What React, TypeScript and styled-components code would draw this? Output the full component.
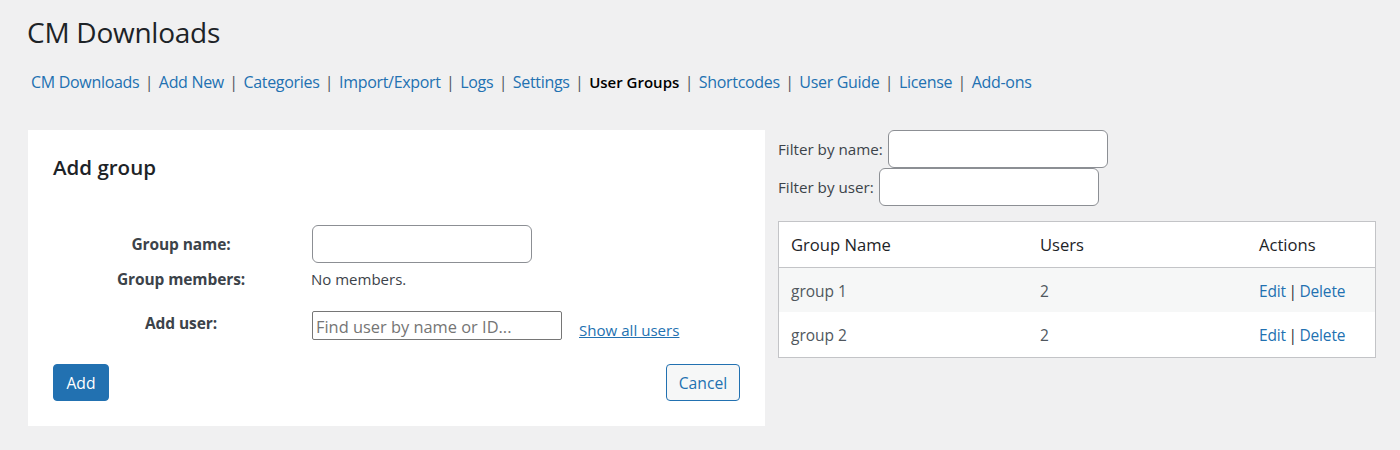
import React from "react";
import styled, { createGlobalStyle } from "styled-components";

const Global = createGlobalStyle`
  html, body { margin: 0; padding: 0; background: #f0f0f1; }
  body { font-family: "Open Sans", "Noto Sans", "Liberation Sans", sans-serif; color: #3c434a; font-size: 14px; }
  * { box-sizing: border-box; }
`;

const Page = styled.div`
  width: 1400px;
  height: 450px;
  overflow: hidden;
  padding: 13px 24px 0 28px;
`;
const Title = styled.h1`
  margin: 0 0 0 -1px;
  font-size: 28px;
  font-weight: 400;
  line-height: 38px;
  color: #1d2327;
  letter-spacing: -0.25px;
`;
const Nav = styled.nav`
  display: flex;
  align-items: center;
  margin-top: 18px;
  padding-left: 3px;
  height: 26px;
  font-size: 16px;
`;
const NavLink = styled.a<{ $current?: boolean }>`
  color: ${(p) => (p.$current ? "#000" : "#2271b1")};
  font-weight: ${(p) => (p.$current ? 600 : 400)};
  font-size: ${(p) => (p.$current ? "15px" : "16px")};
  letter-spacing: ${(p) => (p.$current ? "0" : "-0.31px")};
  text-decoration: none;
`;
const NavSep = styled.span`
  color: #50575e;
  width: 19.5px;
  text-align: center;
`;
const Columns = styled.div`
  display: flex;
  align-items: flex-start;
  margin-top: 35px;
`;
const Card = styled.section`
  width: 737px;
  height: 296px;
  background: #fff;
  padding: 24px 25px 0;
`;
const CardTitle = styled.h2`
  margin: 0;
  font-size: 20.5px;
  line-height: 26px;
  font-weight: 600;
  color: #1d2327;
`;
const Form = styled.div`
  display: grid;
  grid-template-columns: 259px 1fr;
  grid-template-rows: 38px 43px 43px;
  margin-top: 45px;
`;
const FieldLabel = styled.div<{ $lh: number }>`
  width: 256px;
  text-align: center;
  line-height: ${(p) => p.$lh}px;
  font-weight: 700;
  font-size: 15.5px;
  letter-spacing: -0.1px;
  color: #3c434a;
`;
const FieldValue = styled.div`
  display: flex;
  align-items: flex-start;
`;
const TextInput = styled.input`
  width: 220px;
  height: 38px;
  border: 1px solid #8c8f94;
  border-radius: 6px;
  background: #fff;
  padding: 0 8px;
  outline: none;
`;
const Members = styled.div`
  margin-left: -1px;
  font-size: 15px;
  line-height: 32px;
`;
const SearchInput = styled.input`
  width: 250px;
  height: 29px;
  border: 1px solid #767676;
  border-radius: 2px;
  background: #fff;
  padding: 2px 2px 0 3px;
  font: 400 16.4px "Open Sans", sans-serif;
  outline: none;
  margin-top: 5px;
  &::placeholder { color: #757575; opacity: 1; }
`;
const ShowAll = styled.a`
  margin: 13px 0 0 17px;
  font-size: 15.1px;
  line-height: 22px;
  color: #2271b1;
  text-decoration: underline;
`;
const Actions = styled.div`
  display: flex;
  justify-content: space-between;
  margin-top: 15px;
`;
const PrimaryButton = styled.button`
  width: 56px;
  height: 37px;
  background: #2271b1;
  color: #fff;
  border: 1px solid #2271b1;
  border-radius: 4px;
  font: 400 15.7px "Open Sans", sans-serif;
  padding: 0;
`;
const SecondaryButton = styled.button`
  width: 74px;
  height: 37px;
  background: #f6f7f7;
  color: #2271b1;
  border: 1px solid #2271b1;
  border-radius: 4px;
  font: 400 15.7px "Open Sans", sans-serif;
  padding: 0;
`;
const Side = styled.aside`
  margin-left: 13px;
  width: 598px;
`;
const FilterRow = styled.label`
  display: flex;
  align-items: center;
  height: 38px;
  gap: 5px;
  font-size: 15.2px;
`;
const Table = styled.table`
  width: 598px;
  margin-top: 15px;
  border: 1px solid #c3c4c7;
  border-collapse: separate;
  border-spacing: 0;
  background: #fff;
  table-layout: fixed;
`;
const Th = styled.th<{ $w: number }>`
  width: ${(p) => p.$w}px;
  height: 46px;
  padding: 0 12px;
  text-align: left;
  font-weight: 400;
  font-size: 16.6px;
  color: #1d2327;
  border-bottom: 1px solid #c3c4c7;
`;
const Tr = styled.tr<{ $alt?: boolean }>`
  background: ${(p) => (p.$alt ? "#f6f7f7" : "#fff")};
  &:last-child td { height: 45px; }
`;
const Td = styled.td`
  height: 44px;
  padding: 1px 12px 0;
  font-size: 15.5px;
  color: #50575e;
`;
const ActionLink = styled.a`
  color: #2271b1;
  text-decoration: none;
  letter-spacing: -0.15px;
`;
const ActionSep = styled.span`
  color: #2c3338;
  margin: 0 2.5px;
`;

const navItems = ["CM Downloads", "Add New", "Categories", "Import/Export", "Logs", "Settings", "User Groups", "Shortcodes", "User Guide", "License", "Add-ons"];
const groups = ["group 1", "group 2"];

export default function App() {
  return (
    <Page>
      <Global />
      <Title>CM Downloads</Title>
      <Nav>
        {navItems.map((item, i) => (
          <React.Fragment key={item}>
            {i > 0 && <NavSep>|</NavSep>}
            <NavLink href="#" $current={item === "User Groups"}>{item}</NavLink>
          </React.Fragment>
        ))}
      </Nav>
      <Columns>
        <Card>
          <CardTitle>Add group</CardTitle>
          <Form>
            <FieldLabel $lh={38}>Group name:</FieldLabel>
            <FieldValue><TextInput /></FieldValue>
            <FieldLabel $lh={32}>Group members:</FieldLabel>
            <FieldValue><Members>No members.</Members></FieldValue>
            <FieldLabel $lh={34}>Add user:</FieldLabel>
            <FieldValue>
              <SearchInput placeholder="Find user by name or ID..." />
              <ShowAll href="#">Show all users</ShowAll>
            </FieldValue>
          </Form>
          <Actions>
            <PrimaryButton>Add</PrimaryButton>
            <SecondaryButton>Cancel</SecondaryButton>
          </Actions>
        </Card>
        <Side>
          <FilterRow><span>Filter by name:</span><TextInput /></FilterRow>
          <FilterRow><span>Filter by user:</span><TextInput /></FilterRow>
          <Table>
            <thead>
              <tr>
                <Th $w={249}>Group Name</Th>
                <Th $w={219}>Users</Th>
                <Th $w={128}>Actions</Th>
              </tr>
            </thead>
            <tbody>
              {groups.map((g, i) => (
                <Tr key={g} $alt={i === 0}>
                  <Td>{g}</Td>
                  <Td>2</Td>
                  <Td><ActionLink href="#">Edit</ActionLink><ActionSep>|</ActionSep><ActionLink href="#">Delete</ActionLink></Td>
                </Tr>
              ))}
            </tbody>
          </Table>
        </Side>
      </Columns>
    </Page>
  );
}
